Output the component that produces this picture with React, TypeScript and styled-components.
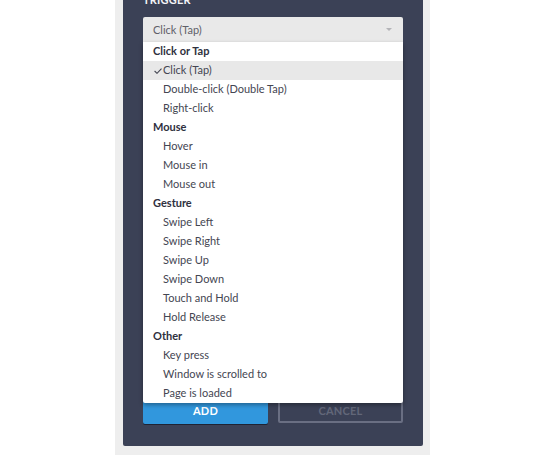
import React from "react";
import styled, { createGlobalStyle } from "styled-components";

const Global = createGlobalStyle`
  html, body { margin: 0; padding: 0; background: #ffffff; }
  body { font-family: Lato, "Open Sans", "Liberation Sans", sans-serif; }
`;

const Page = styled.div`
  width: 535px;
  height: 455px;
  overflow: hidden;
  display: flex;
  justify-content: flex-start;
`;

const Backdrop = styled.div`
  margin-left: 115px;
  width: 315px;
  height: 455px;
  background: #eeeeee;
  padding: 0 7px 0 8px;
  box-sizing: border-box;
`;

const Panel = styled.div`
  height: 446px;
  background: #3b4156;
  border-radius: 0 0 2px 2px;
  padding: 0 20px;
  box-sizing: border-box;
  display: flex;
  flex-direction: column;
`;

const Title = styled.div`
  margin-top: -7px;
  height: 24px;
  font-size: 11px;
  font-weight: 700;
  letter-spacing: 0.2px;
  color: #f4f5f8;
  line-height: 14px;
`;

const SelectWrap = styled.div`
  position: relative;
`;

const SelectBox = styled.div`
  height: 25px;
  background: #e9e9e9;
  border-radius: 2px 2px 0 0;
  display: flex;
  align-items: center;
  justify-content: space-between;
  padding: 0 11px 0 10px;
  font-size: 11px;
  color: #5f6068;
`;

const Caret = styled.span`
  width: 0;
  height: 0;
  border-left: 3px solid transparent;
  border-right: 3px solid transparent;
  border-top: 3px solid #b4b4b8;
`;

const Menu = styled.ul`
  position: absolute;
  left: 0;
  right: 0;
  top: 25px;
  margin: 0;
  padding: 0;
  list-style: none;
  background: #ffffff;
  box-shadow: 0 2px 4px rgba(0, 0, 0, 0.35);
  border-radius: 0 0 2px 2px;
  z-index: 2;
`;

const Row = styled.li<{ $header?: boolean; $selected?: boolean }>`
  height: 19px;
  line-height: 18px;
  padding-bottom: 1px;
  box-sizing: border-box;
  font-size: 11px;
  padding-left: ${(p) => (p.$header ? "10px" : "20px")};
  font-weight: ${(p) => (p.$header ? 700 : 400)};
  color: ${(p) => (p.$header ? "#2f3140" : "#444652")};
  background: ${(p) => (p.$selected ? "#e8e8e8" : "transparent")};
  position: relative;
  white-space: nowrap;
`;

const Check = styled.svg`
  position: absolute;
  left: 11px;
  top: 7px;
`;

const Buttons = styled.div`
  margin-top: 356px;
  display: flex;
  gap: 10px;
`;

const AddButton = styled.button`
  width: 125px;
  height: 26px;
  border: none;
  border-radius: 2px;
  background: #3197dd;
  box-shadow: 0 1px 0 #1f2333;
  color: #ffffff;
  font-family: inherit;
  font-weight: 700;
  font-size: 11px;
  letter-spacing: 0.2px;
  padding: 0 0 1px;
`;

const CancelButton = styled.button`
  width: 125px;
  height: 25px;
  border: 2px solid #6a6f83;
  border-radius: 2px;
  background: transparent;
  color: #626779;
  font-family: inherit;
  font-weight: 700;
  font-size: 11px;
  letter-spacing: 0.2px;
  padding: 0 0 1px;
  box-sizing: border-box;
`;

type Item = { label: string; header?: boolean; selected?: boolean };

const items: Item[] = [
  { label: "Click or Tap", header: true },
  { label: "Click (Tap)", selected: true },
  { label: "Double-click (Double Tap)" },
  { label: "Right-click" },
  { label: "Mouse", header: true },
  { label: "Hover" },
  { label: "Mouse in" },
  { label: "Mouse out" },
  { label: "Gesture", header: true },
  { label: "Swipe Left" },
  { label: "Swipe Right" },
  { label: "Swipe Up" },
  { label: "Swipe Down" },
  { label: "Touch and Hold" },
  { label: "Hold Release" },
  { label: "Other", header: true },
  { label: "Key press" },
  { label: "Window is scrolled to" },
  { label: "Page is loaded" },
];

export default function App() {
  return (
    <Page>
      <Global />
      <Backdrop>
        <Panel>
          <Title>TRIGGER</Title>
          <SelectWrap>
            <SelectBox>
              <span>Click (Tap)</span>
              <Caret />
            </SelectBox>
            <Menu>
              {items.map((it) => (
                <Row key={it.label} $header={it.header} $selected={it.selected}>
                  {it.selected && (
                    <Check width="8" height="6" viewBox="0 0 8 6">
                      <polyline
                        points="0.6,3 3,5.3 7.5,0.6"
                        fill="none"
                        stroke="#444652"
                        strokeWidth="1.1"
                      />
                    </Check>
                  )}
                  {it.label}
                </Row>
              ))}
            </Menu>
          </SelectWrap>
          <Buttons>
            <AddButton>ADD</AddButton>
            <CancelButton>CANCEL</CancelButton>
          </Buttons>
        </Panel>
      </Backdrop>
    </Page>
  );
}
